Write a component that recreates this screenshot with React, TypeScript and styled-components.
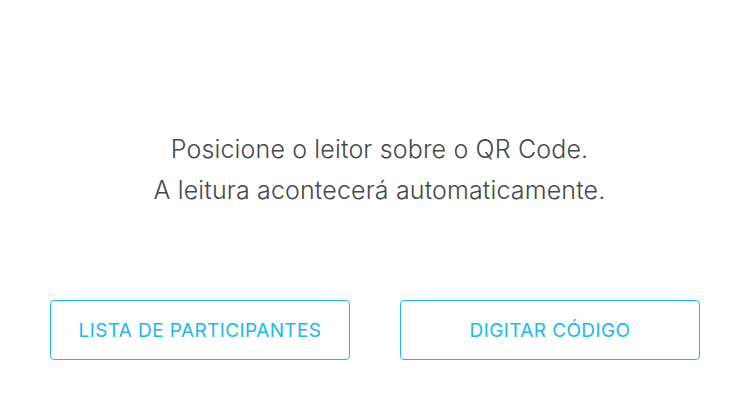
import React from 'react';
import styled, { createGlobalStyle } from 'styled-components';

const GlobalStyle = createGlobalStyle`
  html, body {
    margin: 0;
    padding: 0;
    background: #ffffff;
  }
  body {
    font-family: Inter, 'Noto Sans', 'Liberation Sans', sans-serif;
  }
`;

const Screen = styled.div`
  width: 750px;
  height: 406px;
  display: flex;
  flex-direction: column;
  box-sizing: border-box;
  padding-top: 129px;
`;

const Message = styled.div`
  padding-left: 9px;
  text-align: center;
  color: #47474c;
  font-size: 25px;
  font-weight: 300;
  letter-spacing: 0.15px;
  line-height: 41px;
`;

const Actions = styled.div`
  display: flex;
  justify-content: center;
  gap: 50px;
  margin-top: 89px;
`;

const ActionButton = styled.button`
  width: 300px;
  height: 60px;
  box-sizing: border-box;
  border: 1px solid #1ab8ef;
  border-radius: 4px;
  background: #ffffff;
  color: #1ab8ef;
  font-family: Inter, 'Noto Sans', 'Liberation Sans', sans-serif;
  font-size: 19px;
  font-weight: 400;
  letter-spacing: 0.4px;
  text-transform: uppercase;
  cursor: pointer;
`;

const App = () => {
  return (
    <>
      <GlobalStyle />
      <Screen>
        <Message>
          Posicione o leitor sobre o QR Code.
          <br />
          A leitura acontecerá automaticamente.
        </Message>
        <Actions>
          <ActionButton>Lista de participantes</ActionButton>
          <ActionButton>Digitar código</ActionButton>
        </Actions>
      </Screen>
    </>
  );
};

export default App;
